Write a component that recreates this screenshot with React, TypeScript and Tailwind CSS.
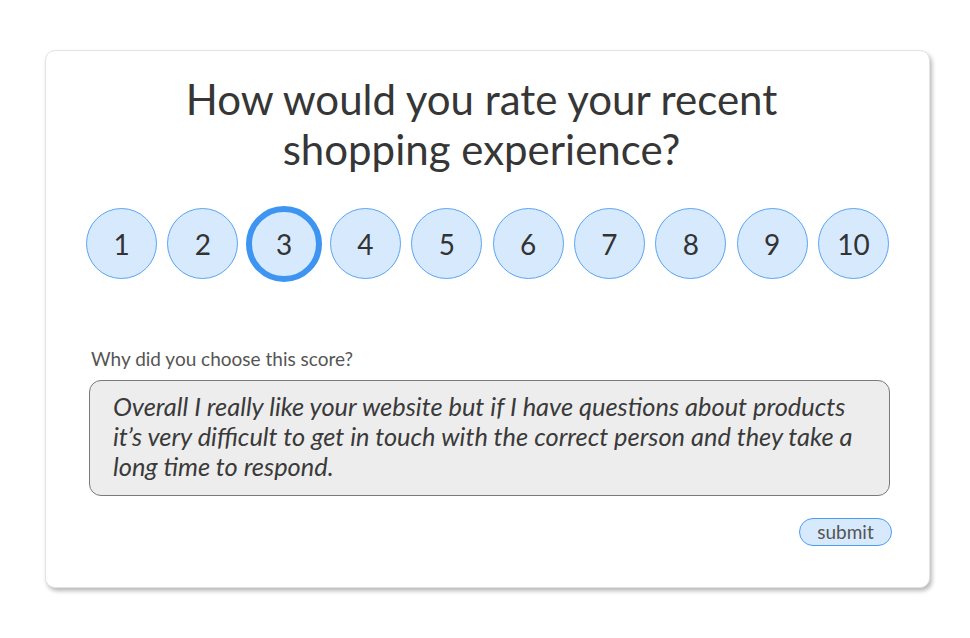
import React, { useState } from 'react';

const scores = [1, 2, 3, 4, 5, 6, 7, 8, 9, 10];

const ScoreButton: React.FC<{ value: number; selected: boolean; onSelect: (v: number) => void }> = ({
  value,
  selected,
  onSelect,
}) => (
  <div className="w-[71px] h-[71px] flex items-center justify-center">
    <button
      onClick={() => onSelect(value)}
      className={
        selected
          ? 'w-[76px] h-[76px] shrink-0 rounded-full bg-[#d7eafd] border-[6px] border-[#3d95f1] flex items-center justify-center text-[28px] text-[#333333]'
          : 'w-[71px] h-[71px] shrink-0 rounded-full bg-[#d7eafd] border border-[#5aa4f2] flex items-center justify-center text-[28px] text-[#333333]'
      }
    >
      {value}
    </button>
  </div>
);

export default function App() {
  const [score, setScore] = useState(3);

  return (
    <div className="w-[970px] h-[638px] bg-white pt-[50px] pl-[45px] font-['Lato','Liberation_Sans',sans-serif]">
      <div className="w-[885px] h-[538px] bg-white rounded-[10px] border border-[#e3e3e3] shadow-[2px_3px_4px_rgba(0,0,0,0.28)] flex flex-col px-[40px]">
        <h1 className="mt-[23px] pr-[12px] text-center text-[42px] leading-[50px] text-[#363636] font-normal">
          How would you rate your recent
          <br />
          shopping experience?
        </h1>

        <div className="mt-[34px] flex justify-between">
          {scores.map((s) => (
            <ScoreButton key={s} value={s} selected={s === score} onSelect={setScore} />
          ))}
        </div>

        <label className="mt-[68px] ml-[5px] text-[19px] leading-[24px] text-[#555555]">
          Why did you choose this score?
        </label>

        <div className="mt-[9px] ml-[3px] mr-[-1px] h-[116px] rounded-[12px] border border-[#7a7a7a] bg-[#ededed] px-[23px] pt-[10px] text-[25.4px] leading-[30px] italic text-[#3a3a3a]">
          Overall I really like your website but if I have questions about products it’s very difficult to get in
          touch with the correct person and they take a long time to respond.
        </div>

        <div className="mt-[22px] mr-[-3px] flex justify-end">
          <button className="w-[93px] h-[28px] rounded-full bg-[#d7eafd] border border-[#4a9df2] text-[19px] leading-[24px] text-[#555555]">
            submit
          </button>
        </div>
      </div>
    </div>
  );
}
